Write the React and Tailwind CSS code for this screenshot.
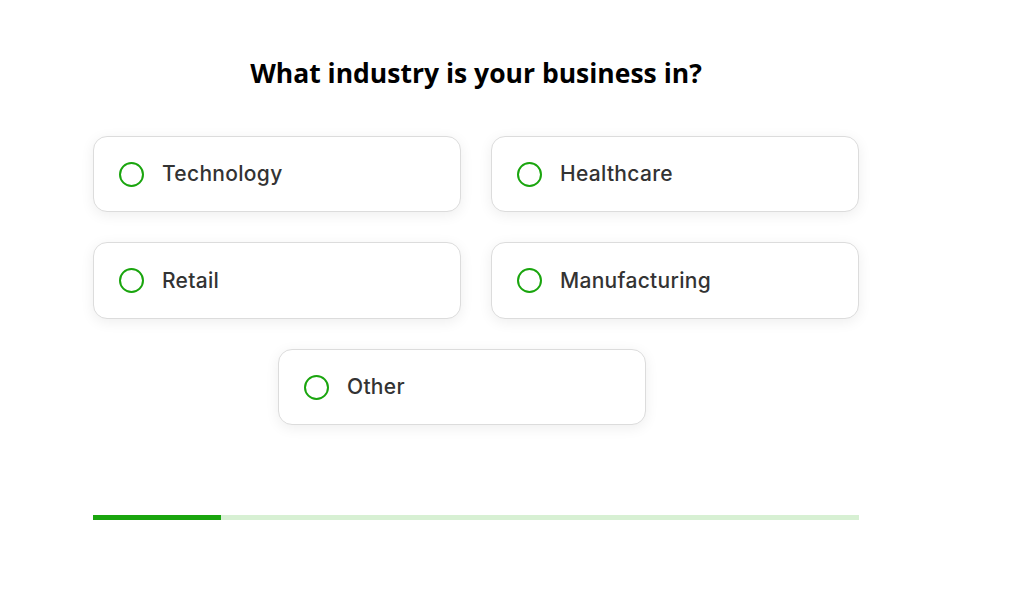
import React from "react";

const options = ["Technology", "Healthcare", "Retail", "Manufacturing"];

function Option({ label }) {
  return (
    <button className="flex h-[76.5px] w-[368px] items-center gap-[18px] rounded-[14px] border border-[#dcdcdc] bg-white pl-[25px] text-left shadow-[0_3px_14px_rgba(0,0,0,0.07)]">
      <span className="h-[25px] w-[25px] shrink-0 rounded-full border-2 border-[#1aa50e]" />
      <span className="font-['Inter',sans-serif] text-[21px] font-medium tracking-[0.3px] text-[#333333]">
        {label}
      </span>
    </button>
  );
}

export default function App() {
  const step = 1;
  const total = 6;

  return (
    <div className="min-h-screen bg-white">
      <div className="ml-[93px] w-[766px] pt-[54px]">
        <h1 className="text-center font-['Open_Sans',sans-serif] text-[26.5px] font-bold text-black">
          What industry is your business in?
        </h1>

        <div className="mt-[42px] grid grid-cols-2 gap-[30px]">
          {options.map((o) => (
            <Option key={o} label={o} />
          ))}
        </div>
        <div className="mt-[30px] pl-[185px]">
          <Option label="Other" />
        </div>

        {/* progress */}
        <div className="mt-[90px] h-[5px] w-full bg-[#d7f0d3]">
          <div
            className="h-full bg-[#1aa50e]"
            style={{ width: `${(step / total) * 100}%` }}
          />
        </div>
      </div>
    </div>
  );
}
